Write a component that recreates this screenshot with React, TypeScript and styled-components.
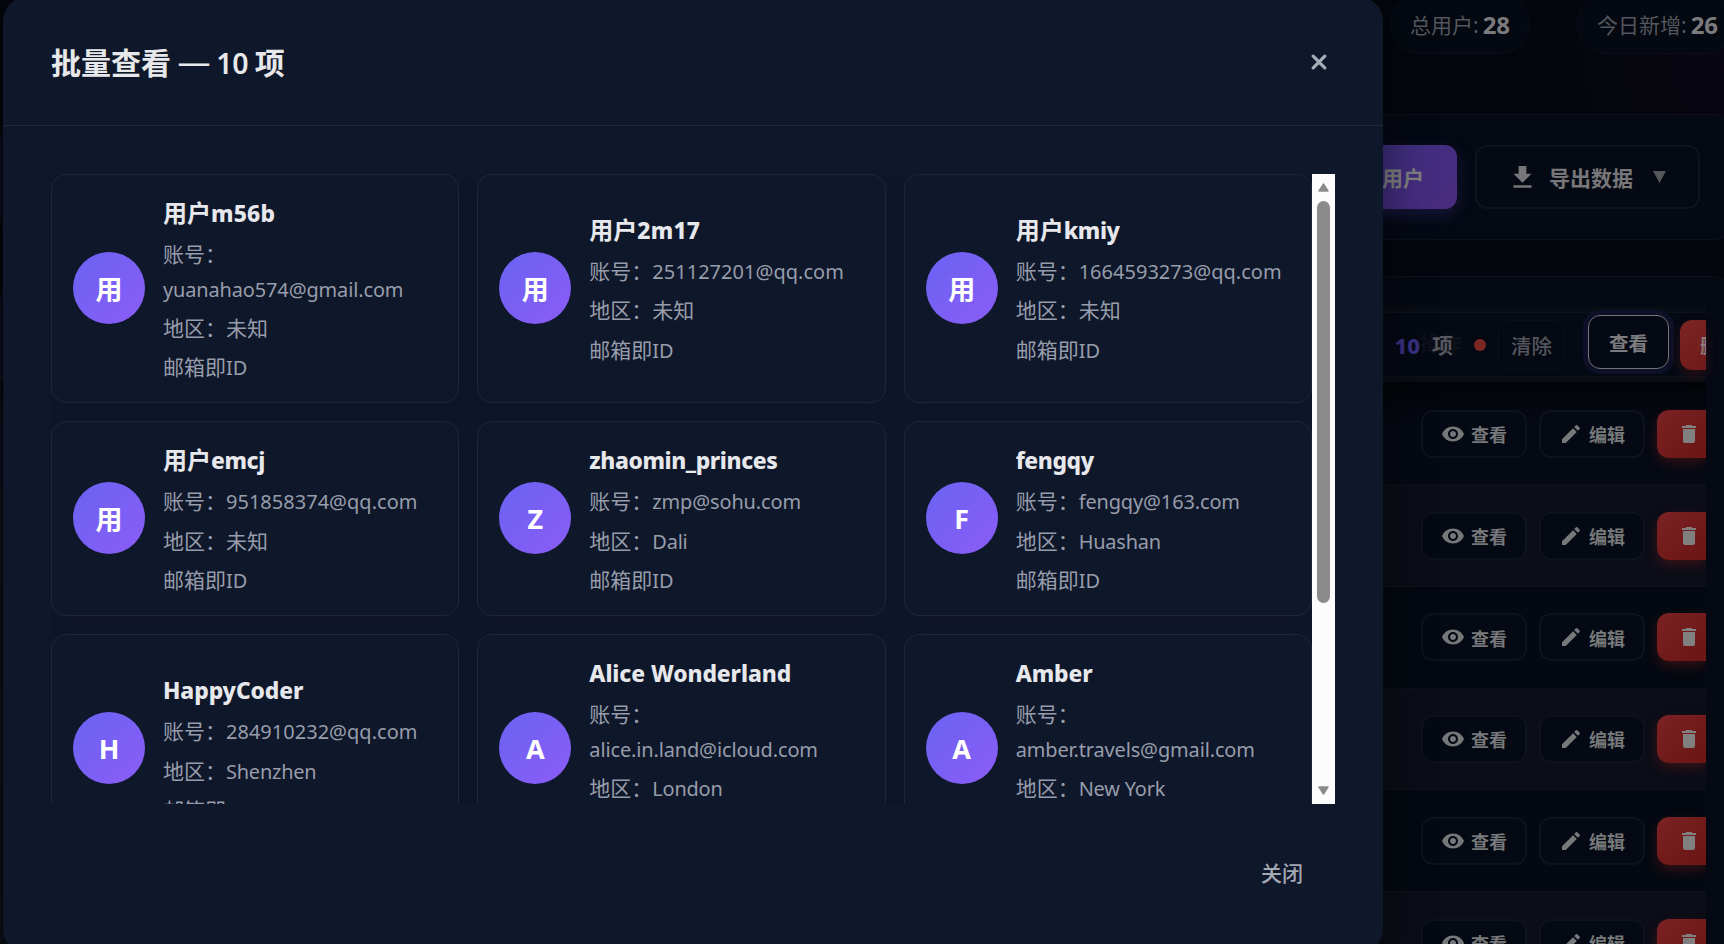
import React from 'react';
import styled, { createGlobalStyle, css } from 'styled-components';
import { MdVisibility, MdEdit, MdDelete } from 'react-icons/md';

const Global = createGlobalStyle`
  * { box-sizing: border-box; }
  html, body { margin: 0; height: 944px; overflow: hidden; background: #03060c; }
  body { font-family: 'Noto Sans', 'Noto Sans CJK SC', sans-serif; line-height: 1.65; }
`;

/* ---------- text ---------- */

const LatinRun = styled.span<{ $spacing?: number }>`
  font-size: 0.95em;
  line-height: 1;
  letter-spacing: ${(p) => p.$spacing ?? 0}px;
`;

const CjkRun = styled.span`
  font-family: 'Noto Sans CJK SC', sans-serif;
  line-height: 1;
`;

function Mixed({ text, spacing }: { text: string; spacing?: number }) {
  const runs = text.match(/[\x20-\x7e]+|[^\x20-\x7e]+/g) ?? [];
  return (
    <>
      {runs.map((run, i) =>
        /[\x20-\x7e]/.test(run[0]) ? (
          <LatinRun key={i} $spacing={spacing}>{run}</LatinRun>
        ) : (
          <CjkRun key={i}>{run}</CjkRun>
        ),
      )}
    </>
  );
}

/* ---------- page behind the dialog ---------- */

const Page = styled.div`
  position: relative;
  width: 1724px;
  height: 944px;
  overflow: hidden;
  background:
    radial-gradient(circle at 1724px 70px, #090611 0, rgba(9, 6, 17, 0) 200px),
    #03060c;
`;

const Backdrop = styled.div`
  width: 1737px;
  height: 944px;
  display: flex;
  flex-direction: column;
`;

const Stats = styled.div`
  display: flex;
  justify-content: flex-end;
  gap: 48px;
  height: 54px;
  margin-bottom: 60px;
  padding-right: 1px;
`;

const StatPill = styled.div<{ $width: number }>`
  display: flex;
  align-items: center;
  gap: 4px;
  width: ${(p) => p.$width}px;
  height: 60px;
  margin-top: -6px;
  padding: 2px 0 0 19px;
  flex: none;
  white-space: nowrap;
  border: 1px solid #0b1018;
  border-radius: 30px;
  background: #040810;
  color: #53565c;
  font-size: 21px;
  strong { color: #7b7b7d; font-size: 24px; line-height: 1; }
`;

const Toolbar = styled.div`
  display: flex;
  justify-content: flex-end;
  align-items: center;
  gap: 18px;
  height: 126px;
  padding-right: 36px;
  border: 1px solid #0d1219;
  border-radius: 24px;
  background: #050913;
  flex: none;
`;

const ToolButton = styled.div<{ $primary?: boolean }>`
  display: flex;
  align-items: center;
  flex: none;
  height: 64px;
  border-radius: 12px;
  font-family: 'Noto Sans CJK SC', sans-serif;
  font-size: 21px;
  font-weight: 700;
  white-space: nowrap;
  ${(p) =>
    p.$primary
      ? css`
          width: 190px;
          justify-content: flex-end;
          padding-right: 33px;
          color: #808082;
          background: linear-gradient(135deg, #343080, #4a2c7e);
          box-shadow: 0 6px 16px rgba(60, 48, 140, 0.35);
        `
      : css`
          width: 225px;
          padding-left: 30px;
          color: #777779;
          background: #050913;
          border: 2px solid #0f141b;
        `}
`;

const DownloadIcon = styled.svg`
  width: 31px;
  height: 31px;
  margin: 0 11px 0 0;
  flex: none;
  fill: currentColor;
`;

const Caret = styled.svg`
  width: 13px;
  height: 12px;
  margin: -1px 0 0 20px;
  flex: none;
  fill: #55575b;
`;

const TablePanel = styled.div`
  flex: 1;
  min-height: 0;
  margin-top: 36px;
  padding: 30px 30px 0 0;
  border: 1px solid #0d1219;
  border-bottom: 0;
  border-radius: 24px 24px 0 0;
  background: #050913;
`;

const TableClip = styled.div`
  overflow: hidden;
  height: 640px;
`;

const BatchBar = styled.div`
  display: flex;
  justify-content: flex-end;
  align-items: center;
  height: 75px;
  border-top: 5px solid #090d14;
  border-bottom: 5px solid #090d14;
  background: #050913;
  box-shadow: inset 0 1px #0e1319, inset 0 -1px #0e1319;
  font-size: 21px;
  font-weight: 600;
  color: #55585e;
`;

const Count = styled.b`
  color: #393081;
  font-size: 22px;
  font-weight: 800;
  margin: 2px 12px 0 0;
`;

const Unit = styled.span`
  position: relative;
  padding-top: 2px;
`;

const ColumnTitle = styled.span`
  position: absolute;
  left: -12px;
  top: -1px;
  color: #0d1119;
  font-family: 'Noto Sans CJK SC', sans-serif;
  font-weight: 700;
  white-space: nowrap;
`;

const UnitText = styled(CjkRun)`
  position: relative;
`;

const Dot = styled.i`
  width: 12px;
  height: 12px;
  margin: 0 12px 0 21px;
  border-radius: 50%;
  background: #7d2626;
`;

const BatchButton = styled.div<{ $kind: 'plain' | 'focus' | 'danger' }>`
  display: flex;
  align-items: center;
  flex: none;
  height: 50px;
  padding-top: 2px;
  border-radius: 12px;
  font-family: 'Noto Sans CJK SC', sans-serif;
  font-weight: 700;
  ${(p) =>
    p.$kind === 'plain' &&
    css`
      width: 67px;
      justify-content: center;
      border: 1px solid #0b1018;
      font-size: 20.5px;
      font-weight: 500;
      color: #53565c;
    `}
  ${(p) =>
    p.$kind === 'focus' &&
    css`
      width: 81px;
      height: 54px;
      margin: -5px 11px 0 23px;
      justify-content: center;
      border: 1.5px solid #737478;
      box-shadow: 0 0 0 5px #0e1027;
      font-size: 19.5px;
      color: #7c7c7e;
    `}
  ${(p) =>
    p.$kind === 'danger' &&
    css`
      width: 26px;
      padding-left: 20px;
      overflow: hidden;
      white-space: nowrap;
      border-radius: 12px 0 0 12px;
      background: linear-gradient(135deg, #7d2525, #6f1a1a);
      box-shadow: 0 6px 12px rgba(120, 30, 30, 0.3);
      font-size: 19.5px;
      color: #8a7b7c;
    `}
`;

const Row = styled.div<{ $alt: boolean; $first: boolean }>`
  display: flex;
  justify-content: flex-end;
  align-items: flex-start;
  gap: 12px;
  height: ${(p) => (p.$first ? 103 : 101.75)}px;
  padding-top: ${(p) => (p.$first ? 28 : 26.7)}px;
  border-bottom: 1px solid #0e1218;
  background: ${(p) =>
    p.$first ? 'linear-gradient(#020408, #050913 44px)' : p.$alt ? '#0b0d17' : '#040911'};
`;

const RowButton = styled.div<{ $danger?: boolean }>`
  display: flex;
  align-items: center;
  gap: 6px;
  flex: none;
  width: ${(p) => (p.$danger ? 49 : 106)}px;
  height: 48px;
  padding: 2px 0 0 18px;
  border: 2px solid #0e1319;
  border-radius: 12px;
  background: #040913;
  color: #77787a;
  font-family: 'Noto Sans CJK SC', sans-serif;
  font-size: 18px;
  font-weight: 700;
  white-space: nowrap;
  svg { width: 24px; height: 24px; flex: none; margin-top: -2px; }
  ${(p) =>
    p.$danger &&
    css`
      border: 0;
      padding-left: 20px;
      border-radius: 12px 0 0 12px;
      background: linear-gradient(135deg, #7b2324, #6d1616 60px);
      box-shadow: 0 5px 12px rgba(120, 28, 28, 0.4);
      color: #808080;
    `}
`;

/* ---------- dialog ---------- */

const Dialog = styled.section`
  position: absolute;
  left: 3px;
  top: -3px;
  width: 1380px;
  height: 956px;
  display: flex;
  flex-direction: column;
  border-radius: 24px;
  background: #0f172a;
  box-shadow: 0 18px 48px rgba(0, 0, 0, 0.5);
  overflow: hidden;
`;

const DialogHeader = styled.header`
  display: flex;
  justify-content: space-between;
  align-items: center;
  height: 129px;
  padding: 3px 48px 0;
  border-bottom: 1px solid #1e283a;
  flex: none;
`;

const Title = styled.h2`
  margin: 0;
  color: #e7e8ea;
  font-size: 30px;
  font-weight: 600;
  line-height: 50px;
  white-space: pre;
  ${CjkRun} { font-weight: 700; }
`;

const Dash = styled.span`
  font-size: 33px;
  font-weight: 400;
  line-height: 1;
  margin: 0 -1px;
`;

const CloseIcon = styled.svg`
  width: 16px;
  height: 16px;
  margin: -2px 8.5px 0 0;
  fill: none;
  stroke: #a7acb9;
  stroke-width: 3.2;
  stroke-linecap: round;
`;

const DialogBody = styled.div`
  display: flex;
  height: 630px;
  margin: 48px 48px 0;
  overflow: hidden;
  flex: none;
`;

const CardGrid = styled.div`
  flex: 1;
  display: grid;
  grid-template-columns: repeat(3, minmax(0, 1fr));
  grid-auto-rows: max-content;
  gap: 18px;
`;

const Card = styled.article`
  display: flex;
  align-items: center;
  gap: 18px;
  padding: 18px 21px 17.8px;
  border: 1px solid #1e2736;
  border-radius: 15px;
  background: #0f172a;
  box-shadow: 0 6px 15px rgba(20, 16, 38, 0.35);
`;

const Avatar = styled.div`
  display: flex;
  align-items: center;
  justify-content: center;
  flex: none;
  width: 72px;
  height: 72px;
  margin-top: -1px;
  border-radius: 50%;
  background: linear-gradient(135deg, #6a63f3, #8b5cf6);
  color: #fff;
  font-size: 27px;
  font-weight: 700;
  ${LatinRun} { font-size: 1em; }
`;

const Info = styled.div`
  flex: 1;
  min-width: 0;
`;

const Name = styled.div`
  height: 39.6px;
  margin-bottom: 4.4px;
  color: #e7e8ec;
  font-size: 24px;
  line-height: 39.6px;
  font-weight: 700;
  ${LatinRun} { font-weight: 800; }
`;

const Line = styled.div`
  margin-bottom: 4.5px;
  color: #979daa;
  font-size: 21px;
  line-height: 34.65px;
  &:last-child { margin-bottom: 0; }
`;

const Scrollbar = styled.div`
  display: flex;
  flex-direction: column;
  align-items: center;
  width: 23px;
  padding: 9px 0;
  background: #fcfcfd;
  flex: none;
`;

const Arrow = styled.svg`
  width: 11px;
  height: 9px;
  flex: none;
  fill: #8b8b8b;
  stroke: #8b8b8b;
  stroke-width: 1.4;
  stroke-linejoin: round;
`;

const Thumb = styled.div`
  width: 13px;
  height: 402px;
  margin: 9px 0 auto;
  border-radius: 7px;
  background: #8b8b8b;
`;

const DialogFooter = styled.footer`
  display: flex;
  flex: 1;
  justify-content: flex-end;
  padding: 51px 80px 0;
  color: #a3a8b3;
  font-family: 'Noto Sans CJK SC', sans-serif;
  font-size: 21px;
  font-weight: 500;
  line-height: 35px;
`;

interface User {
  initial: string;
  name: string;
  email: string;
  region: string;
}

const users: User[] = [
  { initial: '用', name: '用户m56b', email: 'yuanahao574@gmail.com', region: '未知' },
  { initial: '用', name: '用户2m17', email: '251127201@qq.com', region: '未知' },
  { initial: '用', name: '用户kmiy', email: '1664593273@qq.com', region: '未知' },
  { initial: '用', name: '用户emcj', email: '951858374@qq.com', region: '未知' },
  { initial: 'Z', name: 'zhaomin_princes', email: 'zmp@sohu.com', region: 'Dali' },
  { initial: 'F', name: 'fengqy', email: 'fengqy@163.com', region: 'Huashan' },
  { initial: 'H', name: 'HappyCoder', email: '284910232@qq.com', region: 'Shenzhen' },
  { initial: 'A', name: 'Alice Wonderland', email: 'alice.in.land@icloud.com', region: 'London' },
  { initial: 'A', name: 'Amber', email: 'amber.travels@gmail.com', region: 'New York' },
];

const nameSpacing = (name: string) => (/\d/.test(name) ? 0.2 : /[A-Z]/.test(name) ? -0.08 : -0.4);

function UserCard({ user }: { user: User }) {
  return (
    <Card>
      <Avatar><Mixed text={user.initial} /></Avatar>
      <Info>
        <Name><Mixed text={user.name} spacing={nameSpacing(user.name)} /></Name>
        <Line><Mixed text={`账号：${user.email}`} spacing={/^\d/.test(user.email) ? 0.05 : -0.12} /></Line>
        <Line><Mixed text={`地区：${user.region}`} spacing={-0.2} /></Line>
        <Line><Mixed text="邮箱即ID" /></Line>
      </Info>
    </Card>
  );
}

export default function App() {
  return (
    <Page>
      <Global />
      <Backdrop>
        <Stats>
          <StatPill $width={139}><span>总用户:</span><strong>28</strong></StatPill>
          <StatPill $width={159}><span>今日新增:</span><strong>26</strong></StatPill>
        </Stats>
        <Toolbar>
          <ToolButton $primary>用户</ToolButton>
          <ToolButton>
            <DownloadIcon viewBox="0 0 24 24">
              <path d="M19 9h-4V3H9v6H5l7 7 7-7zM5 18v2h14v-2H5z" />
            </DownloadIcon>
            导出数据
            <Caret viewBox="0 0 13 12"><path d="M0 0h13L6.5 12z" /></Caret>
          </ToolButton>
        </Toolbar>
        <TablePanel>
          <BatchBar>
            <Count>10</Count>
            <Unit>
              <ColumnTitle>操作</ColumnTitle>
              <UnitText>项</UnitText>
            </Unit>
            <Dot />
            <BatchButton $kind="plain">清除</BatchButton>
            <BatchButton $kind="focus">查看</BatchButton>
            <BatchButton $kind="danger">删除</BatchButton>
          </BatchBar>
          <TableClip>
            {[0, 1, 2, 3, 4, 5].map((i) => (
              <Row key={i} $alt={i % 2 === 1} $first={i === 0}>
                <RowButton><MdVisibility />查看</RowButton>
                <RowButton><MdEdit />编辑</RowButton>
                <RowButton $danger><MdDelete /></RowButton>
              </Row>
            ))}
          </TableClip>
        </TablePanel>
      </Backdrop>

      <Dialog>
        <DialogHeader>
          <Title>
            <Mixed text="批量查看 " />
            <Dash>—</Dash>
            <Mixed text=" 10 项" spacing={-0.5} />
          </Title>
          <CloseIcon viewBox="0 0 16 16"><path d="M2.2 2.2l11.6 11.6M13.8 2.2L2.2 13.8" /></CloseIcon>
        </DialogHeader>
        <DialogBody>
          <CardGrid>
            {users.map((u) => <UserCard key={u.name} user={u} />)}
          </CardGrid>
          <Scrollbar>
            <Arrow viewBox="0 0 11 9"><path d="M5.5 1L10 8H1z" /></Arrow>
            <Thumb />
            <Arrow viewBox="0 0 11 9"><path d="M5.5 8L10 1H1z" /></Arrow>
          </Scrollbar>
        </DialogBody>
        <DialogFooter>关闭</DialogFooter>
      </Dialog>
    </Page>
  );
}
